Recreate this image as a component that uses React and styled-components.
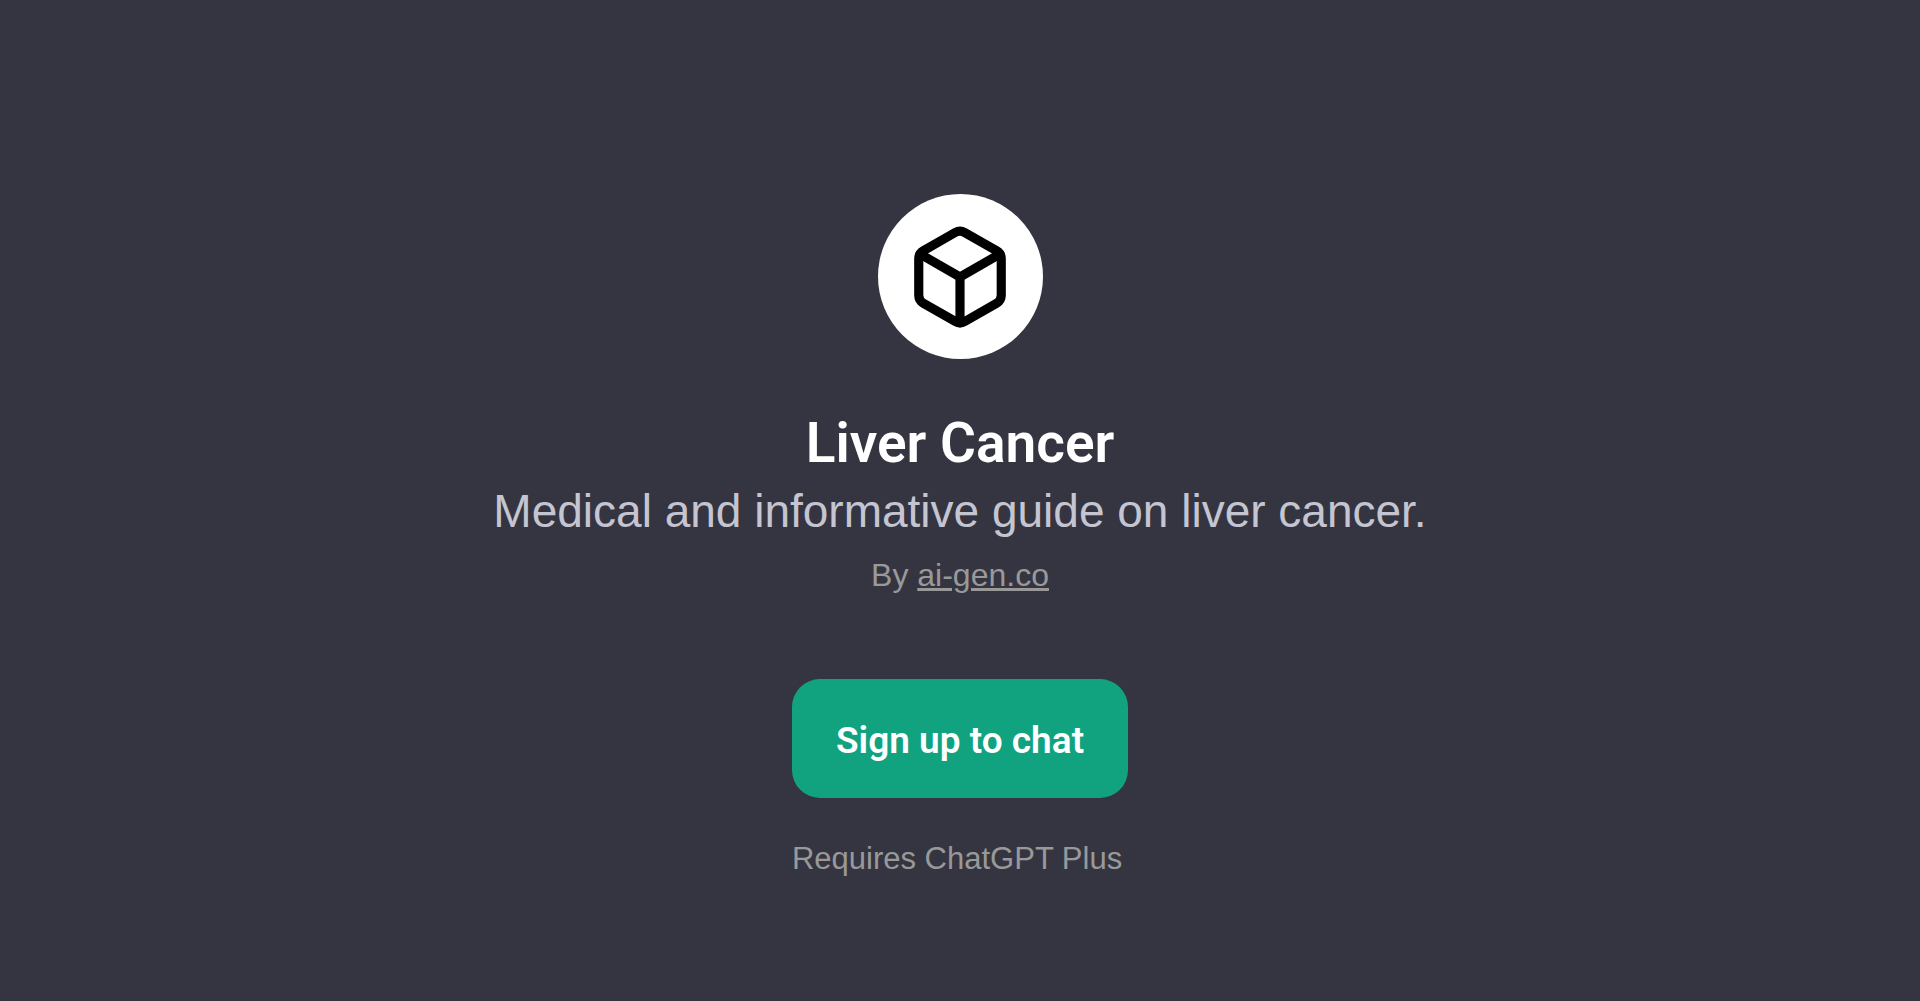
import React from "react";
import styled, { createGlobalStyle } from "styled-components";
import { Box } from "lucide-react";

const GlobalStyle = createGlobalStyle`
  * {
    box-sizing: border-box;
  }
  body {
    margin: 0;
    background-color: #353541;
    font-family: "Liberation Sans", Arial, sans-serif;
  }
`;

const Page = styled.main`
  min-height: 100vh;
  display: flex;
  flex-direction: column;
  align-items: center;
  padding: 194px 24px 48px;
  text-align: center;
`;

const Avatar = styled.div`
  width: 165px;
  height: 165px;
  margin-bottom: 52px;
  display: flex;
  align-items: center;
  justify-content: center;
  border-radius: 50%;
  background-color: #fff;
  color: #000;
`;

const Title = styled.h1`
  margin: 0;
  font-family: Roboto, sans-serif;
  font-size: 55px;
  font-weight: 600;
  line-height: 64px;
  color: #fff;
`;

const Description = styled.p`
  margin: 4px 0 0;
  font-size: 46px;
  line-height: 64px;
  color: #c5c5d2;
`;

const Author = styled.p`
  margin: 8px 0 0;
  font-size: 32px;
  line-height: 48px;
  color: #999;
`;

const AuthorLink = styled.a`
  color: inherit;
  text-decoration: underline;
`;

const Actions = styled.div`
  margin-top: 80px;
  text-align: left;
`;

const SignUpButton = styled.button`
  display: block;
  height: 119px;
  padding: 4px 44px 0;
  border: 0;
  border-radius: 28px;
  background-color: #11a37f;
  color: #fff;
  font-family: Roboto, sans-serif;
  font-size: 37px;
  font-weight: 600;
  cursor: pointer;
`;

const Note = styled.p`
  margin: 37px 0 0;
  font-size: 31px;
  line-height: 48px;
  color: #999;
`;

const App = () => (
  <>
    <GlobalStyle />
    <Page>
      <Avatar>
        <Box size={110} strokeWidth={2} aria-hidden="true" />
      </Avatar>
      <Title>Liver Cancer</Title>
      <Description>
        Medical and informative guide on liver cancer.
      </Description>
      <Author>
        By <AuthorLink href="#">ai-gen.co</AuthorLink>
      </Author>
      <Actions>
        <SignUpButton type="button">Sign up to chat</SignUpButton>
        <Note>Requires ChatGPT Plus</Note>
      </Actions>
    </Page>
  </>
);

export default App;
